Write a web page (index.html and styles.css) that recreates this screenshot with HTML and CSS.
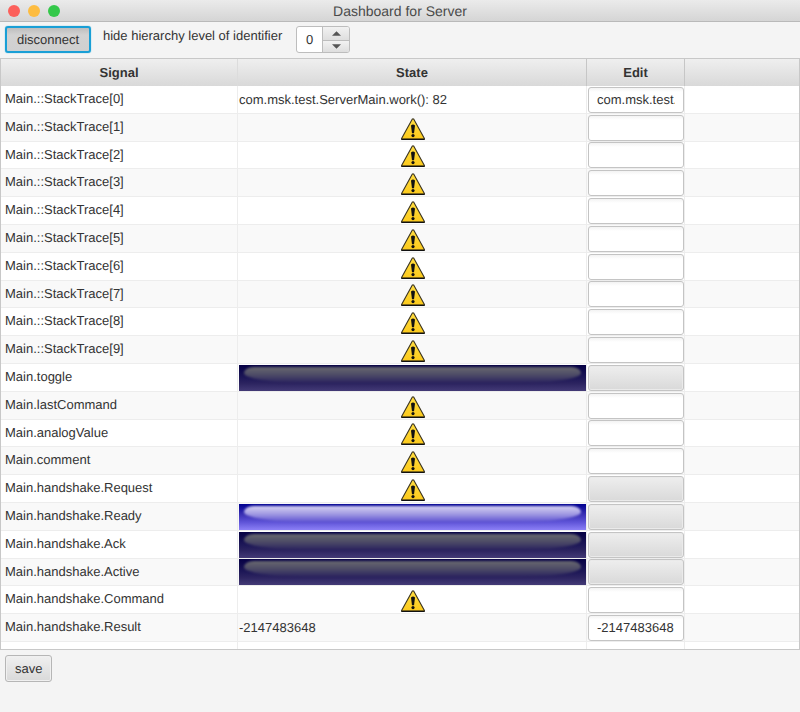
FILE: index.html
```html
<!DOCTYPE html>
<html lang="en">
<head>
<meta charset="utf-8">
<title>Dashboard for Server</title>
<link rel="stylesheet" href="styles.css">
</head>
<body>
<svg class="defs" aria-hidden="true">
  <defs>
    <linearGradient id="amber" x1="0" y1="0" x2="0" y2="1"><stop offset="0" stop-color="#ffdc40"/><stop offset="1" stop-color="#fcca1c"/></linearGradient>
    <symbol id="warn" viewBox="0 0 24 22">
      <path d="M11.2 1.2Q12 .4 12.8 1.2L23.4 20.4V21.3H.6V20.4Z" fill="url(#amber)" stroke="#3a3320" stroke-width="1.1" stroke-linejoin="round"/>
      <path d="M.5 21.3H23.5" stroke="#111" stroke-width="1.4"/>
      <path d="M10 7.6Q12 5.6 14 7.6L13 15.2H11Z" fill="#111"/>
      <circle cx="12" cy="17.6" r="1.6" fill="#111"/>
    </symbol>
  </defs>
</svg>
<header class="titlebar">
  <div class="lights"><span class="light close"></span><span class="light minimize"></span><span class="light zoom"></span></div>
  <h1>Dashboard for Server</h1>
</header>
<div class="toolbar">
  <button class="btn active" type="button">disconnect</button>
  <label for="level">hide hierarchy level of identifier</label>
  <div class="spinner">
    <input id="level" type="text" value="0">
    <div class="steps">
      <button type="button" aria-label="increase"><svg viewBox="0 0 10 5"><path d="M0 5L5 0L10 5Z"/></svg></button>
      <button type="button" aria-label="decrease"><svg viewBox="0 0 10 5"><path d="M0 0L5 5L10 0Z"/></svg></button>
    </div>
  </div>
</div>
<main class="grid">
<table>
  <colgroup><col class="c-signal"><col class="c-state"><col class="c-edit"><col></colgroup>
  <thead><tr><th>Signal</th><th>State</th><th>Edit</th><th></th></tr></thead>
  <tbody>
    <tr><td>Main.::StackTrace[0]</td><td>com.msk.test.ServerMain.work(): 82</td><td><input type="text" aria-label="Main.::StackTrace[0]" value="com.msk.test.ServerMain.work(): 82"></td><td></td></tr>
    <tr><td>Main.::StackTrace[1]</td><td><svg class="warn"><use href="#warn"/></svg></td><td><input type="text" aria-label="Main.::StackTrace[1]"></td><td></td></tr>
    <tr><td>Main.::StackTrace[2]</td><td><svg class="warn"><use href="#warn"/></svg></td><td><input type="text" aria-label="Main.::StackTrace[2]"></td><td></td></tr>
    <tr><td>Main.::StackTrace[3]</td><td><svg class="warn"><use href="#warn"/></svg></td><td><input type="text" aria-label="Main.::StackTrace[3]"></td><td></td></tr>
    <tr><td>Main.::StackTrace[4]</td><td><svg class="warn"><use href="#warn"/></svg></td><td><input type="text" aria-label="Main.::StackTrace[4]"></td><td></td></tr>
    <tr><td>Main.::StackTrace[5]</td><td><svg class="warn"><use href="#warn"/></svg></td><td><input type="text" aria-label="Main.::StackTrace[5]"></td><td></td></tr>
    <tr><td>Main.::StackTrace[6]</td><td><svg class="warn"><use href="#warn"/></svg></td><td><input type="text" aria-label="Main.::StackTrace[6]"></td><td></td></tr>
    <tr><td>Main.::StackTrace[7]</td><td><svg class="warn"><use href="#warn"/></svg></td><td><input type="text" aria-label="Main.::StackTrace[7]"></td><td></td></tr>
    <tr><td>Main.::StackTrace[8]</td><td><svg class="warn"><use href="#warn"/></svg></td><td><input type="text" aria-label="Main.::StackTrace[8]"></td><td></td></tr>
    <tr><td>Main.::StackTrace[9]</td><td><svg class="warn"><use href="#warn"/></svg></td><td><input type="text" aria-label="Main.::StackTrace[9]"></td><td></td></tr>
    <tr><td>Main.toggle</td><td><div class="lamp"></div></td><td><button class="toggle" type="button" aria-label="Main.toggle"></button></td><td></td></tr>
    <tr><td>Main.lastCommand</td><td><svg class="warn"><use href="#warn"/></svg></td><td><input type="text" aria-label="Main.lastCommand"></td><td></td></tr>
    <tr><td>Main.analogValue</td><td><svg class="warn"><use href="#warn"/></svg></td><td><input type="text" aria-label="Main.analogValue"></td><td></td></tr>
    <tr><td>Main.comment</td><td><svg class="warn"><use href="#warn"/></svg></td><td><input type="text" aria-label="Main.comment"></td><td></td></tr>
    <tr><td>Main.handshake.Request</td><td><svg class="warn"><use href="#warn"/></svg></td><td><button class="toggle" type="button" aria-label="Main.handshake.Request"></button></td><td></td></tr>
    <tr><td>Main.handshake.Ready</td><td><div class="lamp on"></div></td><td><button class="toggle" type="button" aria-label="Main.handshake.Ready"></button></td><td></td></tr>
    <tr><td>Main.handshake.Ack</td><td><div class="lamp"></div></td><td><button class="toggle" type="button" aria-label="Main.handshake.Ack"></button></td><td></td></tr>
    <tr><td>Main.handshake.Active</td><td><div class="lamp"></div></td><td><button class="toggle" type="button" aria-label="Main.handshake.Active"></button></td><td></td></tr>
    <tr><td>Main.handshake.Command</td><td><svg class="warn"><use href="#warn"/></svg></td><td><input type="text" aria-label="Main.handshake.Command"></td><td></td></tr>
    <tr><td>Main.handshake.Result</td><td>-2147483648</td><td><input type="text" aria-label="Main.handshake.Result" value="-2147483648"></td><td></td></tr>
    <tr class="filler"><td></td><td></td><td></td><td></td></tr>
  </tbody>
</table>
</main>
<footer><button class="btn" type="button">save</button></footer>
</body>
</html>
```
FILE: styles.css
```css
* { box-sizing: border-box; }
body {
  margin: 0;
  min-height: 100vh;
  background: #f4f4f4;
  color: #333;
  font: 13px/16px "Liberation Sans", Arial, sans-serif;
  text-rendering: geometricPrecision;
}
button, input { font: inherit; color: inherit; margin: 0; text-rendering: inherit; }
.defs { position: absolute; width: 0; height: 0; }

.titlebar {
  display: grid;
  grid-template-columns: 1fr auto 1fr;
  align-items: center;
  height: 22px;
  padding: 0 8px;
  background: linear-gradient(#ebebeb, #d5d5d5);
  border-bottom: 1px solid #b9b9b9;
}
.titlebar h1 { margin: 0; font-size: 14px; font-weight: normal; color: #4a4a4a; }
.lights { display: flex; gap: 8px; }
.light { width: 12px; height: 12px; border-radius: 50%; }
.close { background: #fc605b; }
.minimize { background: #fdbc40; }
.zoom { background: #34c84a; }

.toolbar {
  display: flex;
  align-items: flex-start;
  height: 36px;
  padding: 4px 5px;
}
.toolbar label { margin: 2px 14px 0 12px; }
.btn {
  height: 27px;
  padding: 0 9px;
  border: 1px solid #b6b6b6;
  border-radius: 3px;
  background: linear-gradient(#f0f0f0, #d9d9d9);
  box-shadow: inset 0 0 0 1px #f0f0f0;
}
.btn.active {
  min-width: 86px;
  padding: 0 8px;
  border: 2px solid #199fd6;
  background: linear-gradient(#bdbdbd, #d2d2d2 30%, #d0d0d0);
  box-shadow: 0 0 1px #039ed3;
}
.spinner {
  display: flex;
  width: 54px;
  height: 27px;
  border: 1px solid #bdbdbd;
  border-radius: 3px;
  background: #fff;
  overflow: hidden;
}
.spinner input {
  flex: 1;
  min-width: 0;
  padding: 0;
  border: 0;
  background: none;
  text-align: center;
}
.steps { display: grid; grid-template-rows: 1fr 1fr; width: 27px; border-left: 1px solid #bdbdbd; }
.steps button {
  display: flex;
  align-items: center;
  justify-content: center;
  padding: 0;
  border: 0;
  background: linear-gradient(#f2f2f2, #dedede);
}
.steps button + button { border-top: 1px solid #bdbdbd; }
.steps svg { width: 9px; height: 5px; fill: #555; }

.grid { border: 1px solid #c8c8c8; background: #fff; }
table { width: 100%; table-layout: fixed; border-collapse: separate; border-spacing: 0; }
.c-signal { width: 237px; }
.c-state { width: 349px; }
.c-edit { width: 98px; }
th {
  height: 27px;
  padding: 0;
  background: linear-gradient(#efefef, #d9d9d9);
  border-right: 1px solid #c6c6c6;
}
th:first-child { border-right-color: #dcdcdc; }
th:last-child, td:last-child { border-right: 0; }
td {
  height: 28px;
  padding: 0 0 0 1px;
  border-right: 1px solid #ededed;
  border-bottom: 1px solid #ededed;
  white-space: nowrap;
}
td:first-child { padding: 5px 4px 0; vertical-align: top; }
tr:nth-child(5n+3) td { height: 27px; }
tbody tr:nth-child(even) { background: #f9f9f9; }
tbody tr.filler td { height: 7px; padding: 0; border-bottom: 0; }

td input, .toggle {
  display: block;
  width: 96px;
  height: 26px;
  border: 1px solid #c4c4c4;
  border-radius: 3px;
}
td input { padding: 0 8px; background: linear-gradient(#f3f3f3, #fff 4px); }
.toggle { background: linear-gradient(#eee, #d9d9d9); box-shadow: inset 0 0 0 1px #eaeaea; }
.warn { display: block; width: 24px; height: 22px; margin: 2px auto 0; }

.lamp {
  position: relative;
  height: 26px;
  background: linear-gradient(#050044, #1e1858 50%, #2b235f 70%, #433a76);
}
.lamp::before {
  content: "";
  position: absolute;
  inset: 2px 5px 8px;
  border-radius: 10px 10px 60px 60px / 6px 6px 10px 10px;
  background: linear-gradient(#69696f, #4c4a66 50%, #2b235f);
  filter: blur(1px);
}
.lamp.on { background: linear-gradient(#000090, #3a30b4 40%, #5f54d8 70%, #8c80f6); }
.lamp.on::before { background: linear-gradient(#d6d2f2, #a19ae2 50%, #5f54d2); }

footer { padding: 5px; }
```
